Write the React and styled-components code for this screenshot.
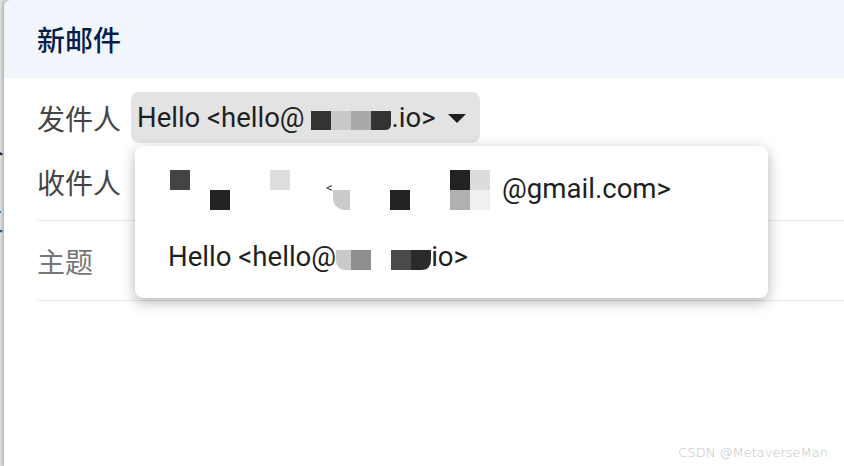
import React from "react";
import styled, { createGlobalStyle } from "styled-components";

const GlobalStyle = createGlobalStyle`
  html, body {
    margin: 0;
    padding: 0;
    width: 844px;
    height: 466px;
    overflow: hidden;
    background: #dcdcdc;
    font-family: Roboto, "Noto Sans CJK SC", sans-serif;
  }
`;

const Page = styled.div`
  display: flex;
  height: 466px;
  position: relative;
`;

const Strip = styled.div`
  width: 4px;
  flex-shrink: 0;
  overflow: hidden;
  display: flex;
  flex-direction: column;
  background: linear-gradient(to right, #e4e4e4, #cdcdcd);
`;

const StripGlyph = styled.span`
  display: block;
  margin-left: -24px;
  margin-top: ${(p) => p.$top}px;
  font-family: "Noto Sans CJK SC", sans-serif;
  font-size: 28px;
  line-height: 28px;
  color: ${(p) => p.$color};
`;

const Dialog = styled.div`
  flex: 1;
  background: #fff;
  border-top-left-radius: 8px;
  box-shadow: -1px 0 4px rgba(0, 0, 0, 0.18);
  overflow: hidden;
`;

const Header = styled.div`
  height: 78px;
  display: flex;
  align-items: center;
  padding-left: 33px;
  background: #f2f6fc;
  color: #041e49;
  font-family: "Noto Sans CJK SC", sans-serif;
  font-size: 28px;
  font-weight: 500;
`;

const Body = styled.div`
  padding-left: 33px;
`;

const Row = styled.div`
  display: flex;
  align-items: center;
  height: ${(p) => p.$h}px;
  padding-top: ${(p) => p.$pt || 0}px;
  border-bottom: ${(p) => (p.$line ? "1px solid #e7e7e7" : "none")};
`;

const Label = styled.span`
  font-family: "Noto Sans CJK SC", sans-serif;
  font-size: 28px;
  line-height: 1;
  color: ${(p) => (p.$muted ? "#777" : "#444")};
  margin-right: 10px;
`;

const SenderPicker = styled.div`
  position: relative;
  display: flex;
  align-items: center;
  height: 51px;
  padding: 0 14px 0 6px;
  background: #e3e3e3;
  border-radius: 8px;
  font-size: 27.5px;
  color: #1f1f1f;
  white-space: nowrap;
`;

const Caret = styled.svg`
  margin-left: 12px;
  margin-top: 2px;
`;

const Menu = styled.div`
  position: absolute;
  top: calc(100% + 3px);
  left: 4px;
  width: 633px;
  padding: 8px 0;
  background: #fff;
  border-radius: 8px;
  box-shadow: 0 4px 14px rgba(0, 0, 0, 0.3);
  z-index: 2;
`;

const MenuItem = styled.div`
  height: 68px;
  display: flex;
  align-items: center;
  padding-left: 33px;
  font-size: 27.6px;
  color: #1f1f1f;
  white-space: nowrap;
`;

const Redacted = styled.svg`
  display: block;
  flex-shrink: 0;
  margin-top: ${(p) => p.$shift || 0}px;
`;

const Watermark = styled.div`
  position: absolute;
  right: 16px;
  bottom: 6px;
  font-family: "DejaVu Sans", sans-serif;
  font-size: 13px;
  font-weight: 300;
  color: #c4c4c4;
`;

// pixelated blocks covering the hidden parts of the addresses
function Mosaic({ w, h, cells, shift, children }) {
  return (
    <Redacted width={w} height={h} viewBox={`0 0 ${w} ${h}`} $shift={shift}>
      {cells.map((c, i) =>
        c.d ? (
          <path key={i} d={c.d} fill={c.fill} />
        ) : (
          <rect key={i} x={c.x} y={c.y} width={c.w} height={c.h} fill={c.fill} />
        )
      )}
      {children}
    </Redacted>
  );
}

const pillCells = [
  { x: 6, y: 0, w: 20, h: 19, fill: "#333" },
  { x: 26, y: 0, w: 20, h: 19, fill: "#c9c9c9" },
  { x: 46, y: 0, w: 20, h: 19, fill: "#a9a9a9" },
  { d: "M66 0 H86 V13 Q86 19 80 19 H66 Z", fill: "#333" },
];

const gmailCells = [
  { x: 2, y: 0, w: 20, h: 20, fill: "#444" },
  { x: 42, y: 20, w: 20, h: 20, fill: "#222" },
  { x: 102, y: 0, w: 20, h: 20, fill: "#dedede" },
  { d: "M165 20 H182 V40 H176 Q165 38 165 28 Z", fill: "#cbcbcb" },
  { x: 222, y: 20, w: 20, h: 20, fill: "#222" },
  { x: 282, y: 0, w: 20, h: 20, fill: "#222" },
  { x: 302, y: 0, w: 20, h: 20, fill: "#dcdcdc" },
  { x: 282, y: 20, w: 20, h: 20, fill: "#b0b0b0" },
  { x: 302, y: 20, w: 20, h: 20, fill: "#f0f0f0" },
];

const helloCells = [
  { d: "M0 0 H15 V20 H8 Q0 18 0 10 Z", fill: "#cacaca" },
  { x: 15, y: 0, w: 20, h: 20, fill: "#8f8f8f" },
  { x: 55, y: 0, w: 20, h: 20, fill: "#4a4a4a" },
  { d: "M75 0 H95 V10 Q95 20 85 20 H75 Z", fill: "#2a2a2a" },
];

export default function App() {
  return (
    <>
      <GlobalStyle />
      <Page>
        <Strip>
          <StripGlyph $top={128} $color="#222">人</StripGlyph>
          <StripGlyph $top={50} $color="#2a4fb0">三</StripGlyph>
        </Strip>
        <Dialog>
          <Header>新邮件</Header>
          <Body>
            <Row $h={51} $pt={14}>
              <Label>发件人</Label>
              <SenderPicker>
                {"Hello <hello@"}
                <Mosaic w={87} h={19} cells={pillCells} shift={6} />
                {".io>"}
                <Caret width="18" height="9" viewBox="0 0 18 9">
                  <polygon points="0,0 18,0 9,9" fill="#1f1f1f" />
                </Caret>
                <Menu>
                  <MenuItem>
                    <Mosaic w={334} h={40} cells={gmailCells} shift={4}>
                      <text x="158" y="22" fontSize="13" fill="#333">
                        {"<"}
                      </text>
                    </Mosaic>
                    {"@gmail.com>"}
                  </MenuItem>
                  <MenuItem>
                    {"Hello <hello@"}
                    <Mosaic w={95} h={20} cells={helloCells} shift={8} />
                    {"io>"}
                  </MenuItem>
                </Menu>
              </SenderPicker>
            </Row>
            <Row $h={77} $line>
              <Label>收件人</Label>
            </Row>
            <Row $h={79} $line>
              <Label $muted>主题</Label>
            </Row>
          </Body>
        </Dialog>
        <Watermark>CSDN @MetaverseMan</Watermark>
      </Page>
    </>
  );
}
